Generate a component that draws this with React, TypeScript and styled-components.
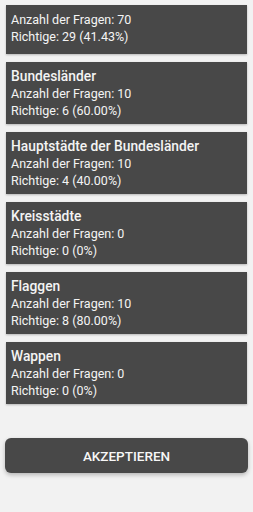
import { FC } from 'react'
import styled, { createGlobalStyle } from 'styled-components'

const GlobalStyle = createGlobalStyle`
  html, body {
    margin: 0;
    padding: 0;
    background-color: #f2f2f2;
    font-family: Roboto, 'Noto Sans', sans-serif;
  }
`

const PageWrapper = styled.div`
  display: flex;
  flex-direction: column;
  width: 253px;
  height: 512px;
  box-sizing: border-box;
  padding: 5px 6px 0 6px;
`

const CardList = styled.div`
  display: flex;
  flex-direction: column;
  gap: 8px;
`

const Card = styled.div<{ $hasTitle: boolean }>`
  background-color: #484848;
  color: #f4f4f4;
  padding: 6px 5px ${({ $hasTitle }) => ($hasTitle ? '5px' : '9px')} 5px;
  box-shadow: 0 1px 2px rgba(0, 0, 0, 0.25);
  font-size: 12.5px;
  line-height: 17px;

  p {
    margin: 0;
    white-space: nowrap;
  }
`

const CardTitle = styled.p`
  font-size: 13.8px;
  font-weight: 500;
`

const AcceptButton = styled.button`
  margin: 34px -1px 0 -1px;
  height: 35px;
  border: none;
  border-radius: 6px;
  background-color: #484848;
  color: #f7f7f7;
  font-family: Roboto, 'Noto Sans', sans-serif;
  font-size: 13.5px;
  font-weight: 500;
  box-shadow: 0 2px 4px rgba(0, 0, 0, 0.25);
`

interface IStat {
  title?: string
  total: number
  correct: number
  percent: string
}

const stats: IStat[] = [
  { total: 70, correct: 29, percent: '41.43%' },
  { title: 'Bundesländer', total: 10, correct: 6, percent: '60.00%' },
  { title: 'Hauptstädte der Bundesländer', total: 10, correct: 4, percent: '40.00%' },
  { title: 'Kreisstädte', total: 0, correct: 0, percent: '0%' },
  { title: 'Flaggen', total: 10, correct: 8, percent: '80.00%' },
  { title: 'Wappen', total: 0, correct: 0, percent: '0%' },
]

const StatCard: FC<IStat> = ({ title, total, correct, percent }) => (
  <Card $hasTitle={!!title}>
    {title && <CardTitle>{title}</CardTitle>}
    <p>Anzahl der Fragen: {total}</p>
    <p>
      Richtige: {correct} ({percent})
    </p>
  </Card>
)

const App: FC = () => {
  return (
    <>
      <GlobalStyle />
      <PageWrapper>
        <CardList>
          {stats.map((s, i) => (
            <StatCard key={i} {...s} />
          ))}
        </CardList>
        <AcceptButton>AKZEPTIEREN</AcceptButton>
      </PageWrapper>
    </>
  )
}

export default App
